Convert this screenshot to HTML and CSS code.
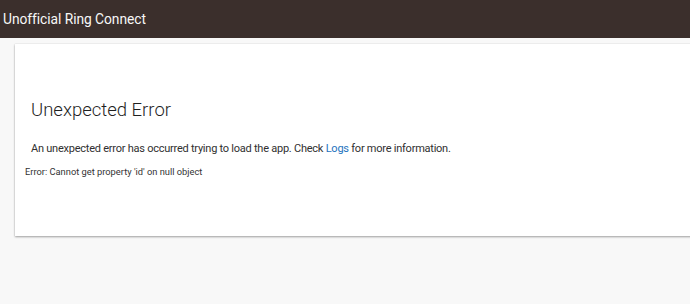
FILE: index.html
```html
<!DOCTYPE html>
<html>
<head>
<meta charset="utf-8">
<link rel="stylesheet" href="styles.css">
</head>
<body>
<header class="topbar">
  <span class="app-title">Unofficial Ring Connect</span>
</header>
<main class="content">
  <section class="card">
    <h1 class="card-title">Unexpected Error</h1>
    <p class="card-text">An unexpected error has occurred trying to load the app. Check <a class="link" href="#">Logs</a> for more information.</p>
    <div class="error-detail">Error: Cannot get property 'id' on null object</div>
  </section>
</main>
</body>
</html>
```
FILE: styles.css
```css
html, body {
  margin: 0;
  padding: 0;
}
body {
  background: #f8f8f8;
  font-family: Roboto, "Liberation Sans", sans-serif;
  width: 690px;
  height: 304px;
  overflow: hidden;
}
.topbar {
  height: 38px;
  background: #3b2f2c;
  display: flex;
  align-items: center;
  padding-left: 3px;
}
.app-title {
  color: #f7f7f7;
  font-size: 13.8px;
  letter-spacing: -0.05px;
  font-weight: 400;
}
.content {
  padding: 6px 0 0 15px;
}
.card {
  background: #ffffff;
  width: 700px;
  height: 192px;
  box-shadow: 0 1px 2px rgba(0,0,0,0.35), 0 0 1px rgba(0,0,0,0.15);
  box-sizing: border-box;
  padding: 53px 0 0 16px;
}
.card-title {
  margin: 0;
  font-size: 18.5px;
  font-weight: 300;
  color: #1f1f1f;
  line-height: 26px;
}
.card-text {
  margin: 17px 0 0 0;
  font-size: 11px;
  letter-spacing: -0.24px;
  color: #303030;
  line-height: 18px;
}
.link {
  color: #1e73be;
  text-decoration: none;
}
.error-detail {
  margin: 7px 0 0 -6px;
  font-size: 9.3px;
  color: #333333;
  line-height: 14px;
}
```
